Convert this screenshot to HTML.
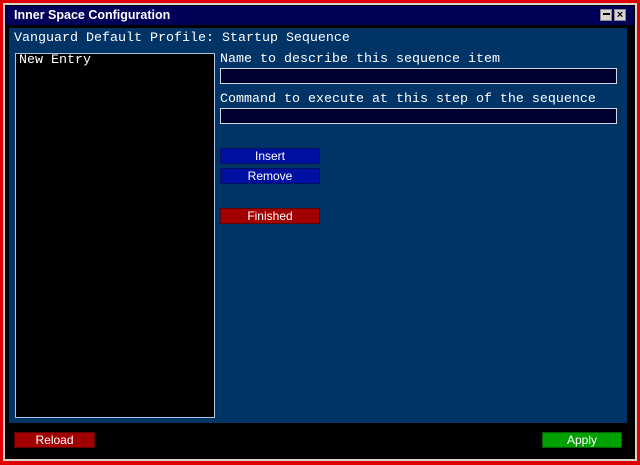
<!DOCTYPE html>
<html><head><style>
*{margin:0;padding:0;box-sizing:border-box}
body{width:640px;height:465px;background:#e00000;position:relative;overflow:hidden}
.a{position:absolute}
.mono{font-family:"Liberation Mono",monospace;font-size:13.33px;color:#fff;line-height:14px;white-space:pre}
.btn{position:absolute;width:100px;height:16px;font-family:"Liberation Sans",sans-serif;font-size:12px;color:#fff;text-align:center;line-height:15px}
.inp{position:absolute;left:220px;width:397px;height:16px;background:#000030;border:1px solid #d0d8e8}
</style></head><body>
<div class="a" style="left:3px;top:3px;width:634px;height:458px;background:#d8d4d0"></div>
<div class="a" style="left:5px;top:5px;width:630px;height:454px;background:#000"></div>
<div class="a" style="left:6px;top:6px;width:628px;height:19px;background:#000058"></div>
<div class="a" style="left:14px;top:8px;font-family:'Liberation Sans',sans-serif;font-weight:bold;font-size:12.5px;color:#fff">Inner Space Configuration</div>
<div class="a" style="left:600px;top:9px;width:12px;height:12px;background:#d8d4d0;border:1px solid #888"><div class="a" style="left:2px;top:3px;width:7px;height:2px;background:#000"></div></div>
<div class="a" style="left:614px;top:9px;width:12px;height:12px;background:#d8d4d0;border:1px solid #888;font:bold 11px 'Liberation Sans',sans-serif;text-align:center;line-height:10px">×</div>
<div class="a" style="left:9px;top:28px;width:618px;height:395px;background:#003366"></div>
<div class="a mono" style="left:14px;top:32px">Vanguard Default Profile: Startup Sequence</div>
<div class="a" style="left:15px;top:53px;width:200px;height:365px;background:#000;border:1px solid #b0c4de"></div>
<div class="a mono" style="left:19px;top:54px">New Entry</div>
<div class="a mono" style="left:220px;top:53px">Name to describe this sequence item</div>
<div class="inp" style="top:68px"></div>
<div class="a mono" style="left:220px;top:93px">Command to execute at this step of the sequence</div>
<div class="inp" style="top:108px"></div>
<div class="btn" style="left:220px;top:148px;background:#0010a0;border:1px solid #001060">Insert</div>
<div class="btn" style="left:220px;top:168px;background:#0010a0;border:1px solid #001060">Remove</div>
<div class="btn" style="left:220px;top:208px;background:#a00000;border:1px solid #600000">Finished</div>
<div class="btn" style="left:14px;top:432px;width:81px;background:#a00000;border:1px solid #600000">Reload</div>
<div class="btn" style="left:542px;top:432px;width:80px;background:#00a000;border:1px solid #006000">Apply</div>
</body></html>
